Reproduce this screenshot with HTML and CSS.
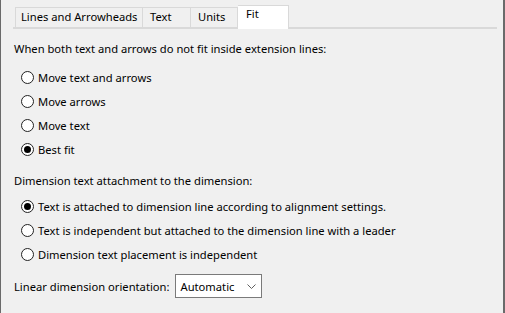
FILE: index.html
```html
<!DOCTYPE html>
<html lang="en">
<head>
    <meta charset="UTF-8">
    <title>Dimension Style - Fit</title>
    <link rel="stylesheet" href="styles.css">
</head>
<body>
    <div class="dialog">
        <div class="tabs">
            <div class="tab wide">Lines and Arrowheads</div>
            <div class="tab">Text</div>
            <div class="tab last">Units</div>
            <div class="tab active">Fit</div>
        </div>

        <div class="page">
            <p class="label first">When both text and arrows do not fit inside extension lines:</p>
            <div class="group">
                <label class="radio"><span class="dot"></span>Move text and arrows</label>
                <label class="radio"><span class="dot"></span>Move arrows</label>
                <label class="radio"><span class="dot"></span>Move text</label>
                <label class="radio checked"><span class="dot"></span>Best fit</label>
            </div>

            <p class="label second">Dimension text attachment to the dimension:</p>
            <div class="group tight">
                <label class="radio checked"><span class="dot"></span>Text is attached to dimension line according to alignment settings.</label>
                <label class="radio"><span class="dot"></span>Text is independent but attached to the dimension line with a leader</label>
                <label class="radio"><span class="dot"></span>Dimension text placement is independent</label>
            </div>

            <div class="row">
                <span>Linear dimension orientation:</span>
                <div class="select">
                    <span>Automatic</span>
                    <svg width="9" height="5" viewBox="0 0 9 5"><path d="M0.5 0.5 L4.5 4.5 L8.5 0.5" fill="none" stroke="#606060" stroke-width="1"/></svg>
                </div>
            </div>
        </div>
    </div>
</body>
</html>
```

FILE: styles.css
```css
html, body {
    margin: 0;
    padding: 0;
}
body {
    font-family: "Noto Sans", "Open Sans", Arial, sans-serif;
    font-size: 11.2px;
    color: #000;
    background: #f0f0f0;
}
.dialog {
    width: 505px;
    height: 313px;
    box-sizing: border-box;
    border-left: 1px solid #6a6a6a;
    border-right: 2px solid #6a6a6a;
    background: #f0f0f0;
}
.tabs {
    display: flex;
    align-items: flex-end;
    margin: 0 6px 0 12px;
    padding: 5px 0 0 2px;
    height: 22px;
    border-bottom: 2px solid #d9d9d9;
}
.tab {
    box-sizing: border-box;
    width: 48px;
    height: 20px;
    line-height: 18px;
    padding: 0 0 0 7px;
    border: 1px solid #d9d9d9;
    border-bottom: none;
    border-right: none;
}
.tab.wide {
    width: 127px;
    padding-left: 5px;
}
.tab.last {
    border-right: 1px solid #d9d9d9;
}
.tab.active {
    width: 51px;
    height: 24px;
    margin-bottom: -2px;
    line-height: 16px;
    padding-left: 8px;
    background: #fff;
    border: 1px solid #d9d9d9;
    border-left: none;
    border-bottom: none;
}
.page {
    padding-left: 13px;
}
.label {
    margin: 0;
    height: 24px;
    line-height: 24px;
}
.label.first {
    margin-top: 8px;
}
.label.second {
    margin-top: 8px;
}
.group {
    display: flex;
    flex-direction: column;
    padding-left: 7px;
    margin-top: 4px;
}
.group.tight {
    margin-top: 1px;
}
.radio {
    display: flex;
    align-items: center;
    height: 24px;
}
.dot {
    box-sizing: border-box;
    width: 13px;
    height: 13px;
    border: 1px solid #222;
    border-radius: 50%;
    background: #fff;
    margin-right: 4px;
    display: flex;
    align-items: center;
    justify-content: center;
}
.radio.checked .dot::after {
    content: "";
    width: 7px;
    height: 7px;
    border-radius: 50%;
    background: #000;
}
.row {
    display: flex;
    align-items: center;
    margin-top: 8px;
}
.select {
    box-sizing: border-box;
    margin-left: 5px;
    width: 87px;
    height: 24px;
    border: 1px solid #7a7a7a;
    background: #fff;
    display: flex;
    align-items: center;
    justify-content: space-between;
    padding: 0 5px 0 5px;
}
```
